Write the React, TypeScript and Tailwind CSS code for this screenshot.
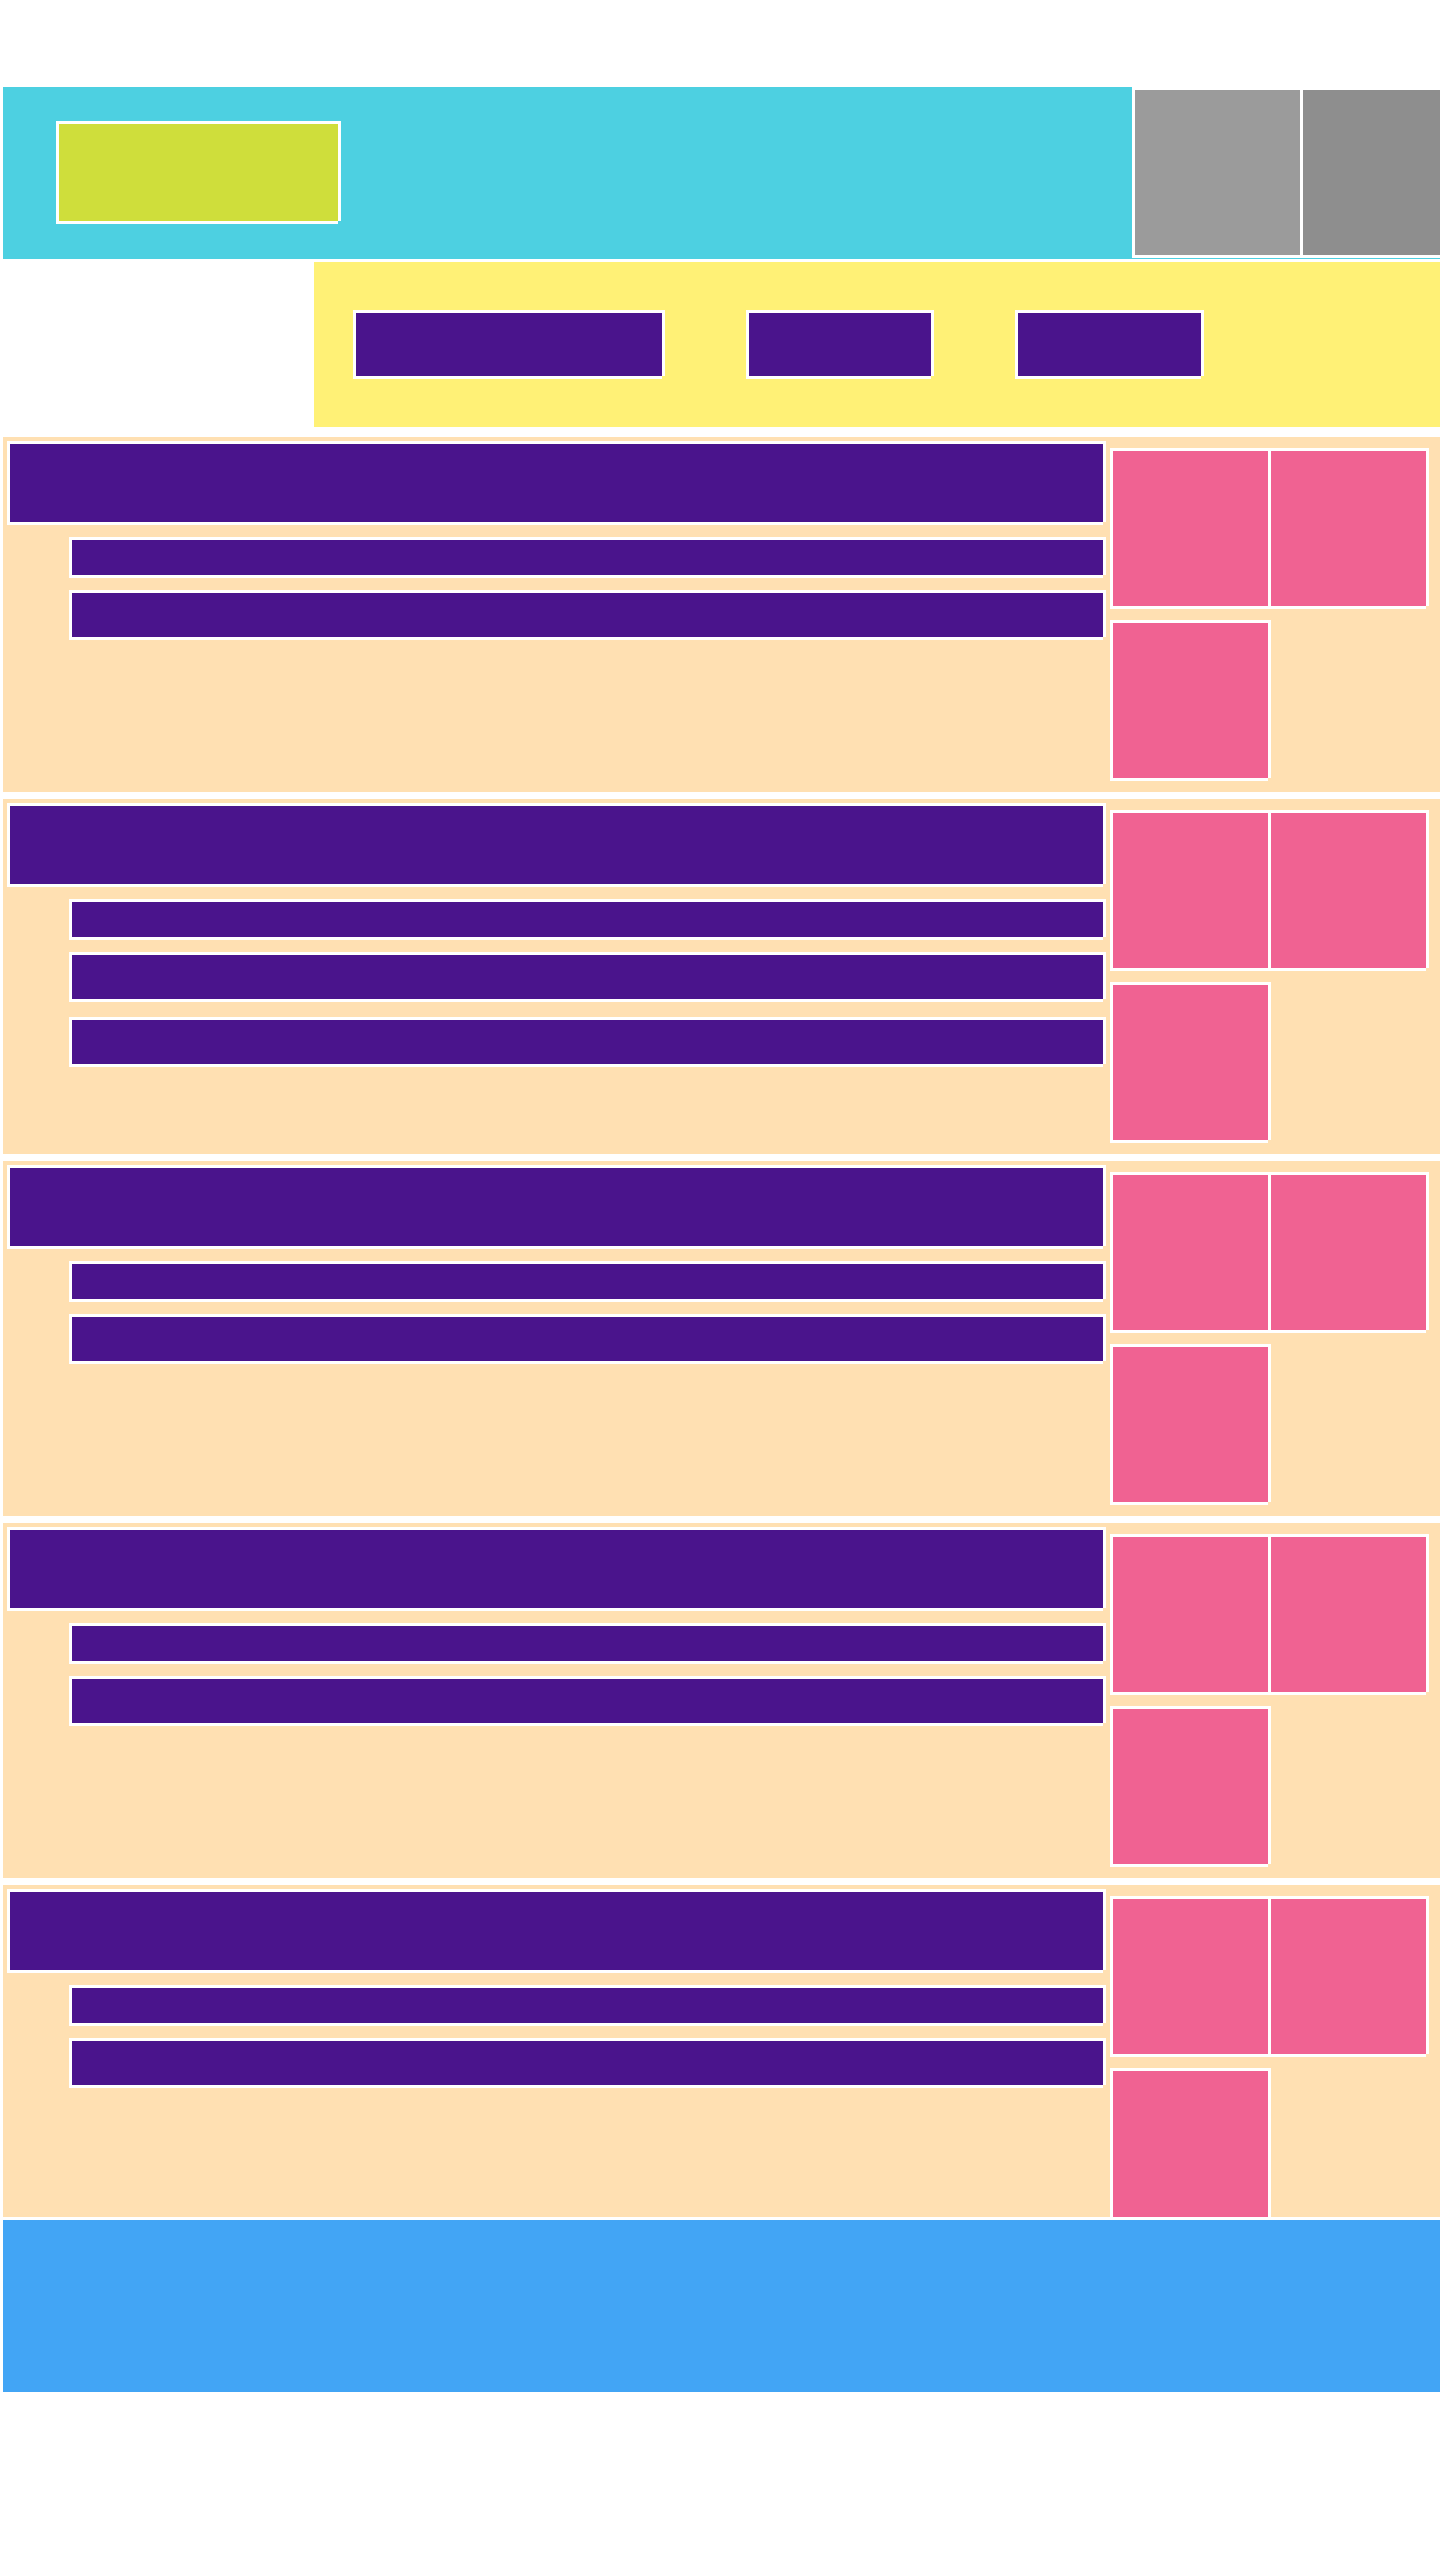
const frame =
  'border-l-[3px] border-t-[3px] border-white shadow-[3px_0_0_0_#fff,0_3px_0_0_#fff]';

function Pinks() {
  return (
    <div className="ml-[7px] mt-[11px] grid grid-cols-[158px_158px] gap-y-[14px] self-start">
      <div className={`h-[158px] bg-[#F06292] ${frame}`} />
      <div className={`h-[158px] bg-[#F06292] ${frame}`} />
      <div className={`h-[158px] bg-[#F06292] ${frame}`} />
    </div>
  );
}

function Section({ extra = false, last = false }: { extra?: boolean; last?: boolean }) {
  return (
    <section
      className={`flex bg-[#FFE0B2] ${last ? 'h-[332px] overflow-hidden' : 'h-[355px]'}`}
    >
      <div className="flex w-[1100px] shrink-0 flex-col pl-[4px] pt-[4px]">
        <div className={`h-[81px] w-[1096px] bg-[#4A148C] ${frame}`} />
        <div className={`ml-[62px] mt-[15px] h-[38px] w-[1034px] bg-[#4A148C] ${frame}`} />
        <div className={`ml-[62px] mt-[15px] h-[47px] w-[1034px] bg-[#4A148C] ${frame}`} />
        {extra && (
          <div className={`ml-[62px] mt-[18px] h-[47px] w-[1034px] bg-[#4A148C] ${frame}`} />
        )}
      </div>
      <Pinks />
    </section>
  );
}

export default function App() {
  return (
    <div className="min-h-[2560px] w-[1440px] overflow-hidden bg-white pl-[3px] pt-[87px]">
      <header className="flex h-[172px] bg-[#4DD0E1]">
        <div className="w-[1129px] shrink-0 pl-[53px] pt-[34px]">
          <div className={`h-[100px] w-[282px] bg-[#CFDE3B] ${frame}`} />
        </div>
        <div className={`h-[168px] w-[168px] shrink-0 bg-[#9B9B9B] ${frame}`} />
        <div className={`h-[168px] w-[168px] shrink-0 bg-[#8E8E8E] ${frame}`} />
      </header>

      <nav className="ml-[311px] mt-[3px] flex h-[165px] items-start gap-[84px] bg-[#FFF176] pl-[39px] pt-[48px]">
        <div className={`h-[66px] w-[309px] bg-[#4A148C] ${frame}`} />
        <div className={`h-[66px] w-[185px] bg-[#4A148C] ${frame}`} />
        <div className={`h-[66px] w-[186px] bg-[#4A148C] ${frame}`} />
      </nav>

      <main className="mt-[10px] flex flex-col gap-[7px]">
        <Section />
        <Section extra />
        <Section />
        <Section />
        <Section last />
      </main>

      <footer className="mt-[3px] h-[172px] bg-[#42A5F5]" />
    </div>
  );
}
